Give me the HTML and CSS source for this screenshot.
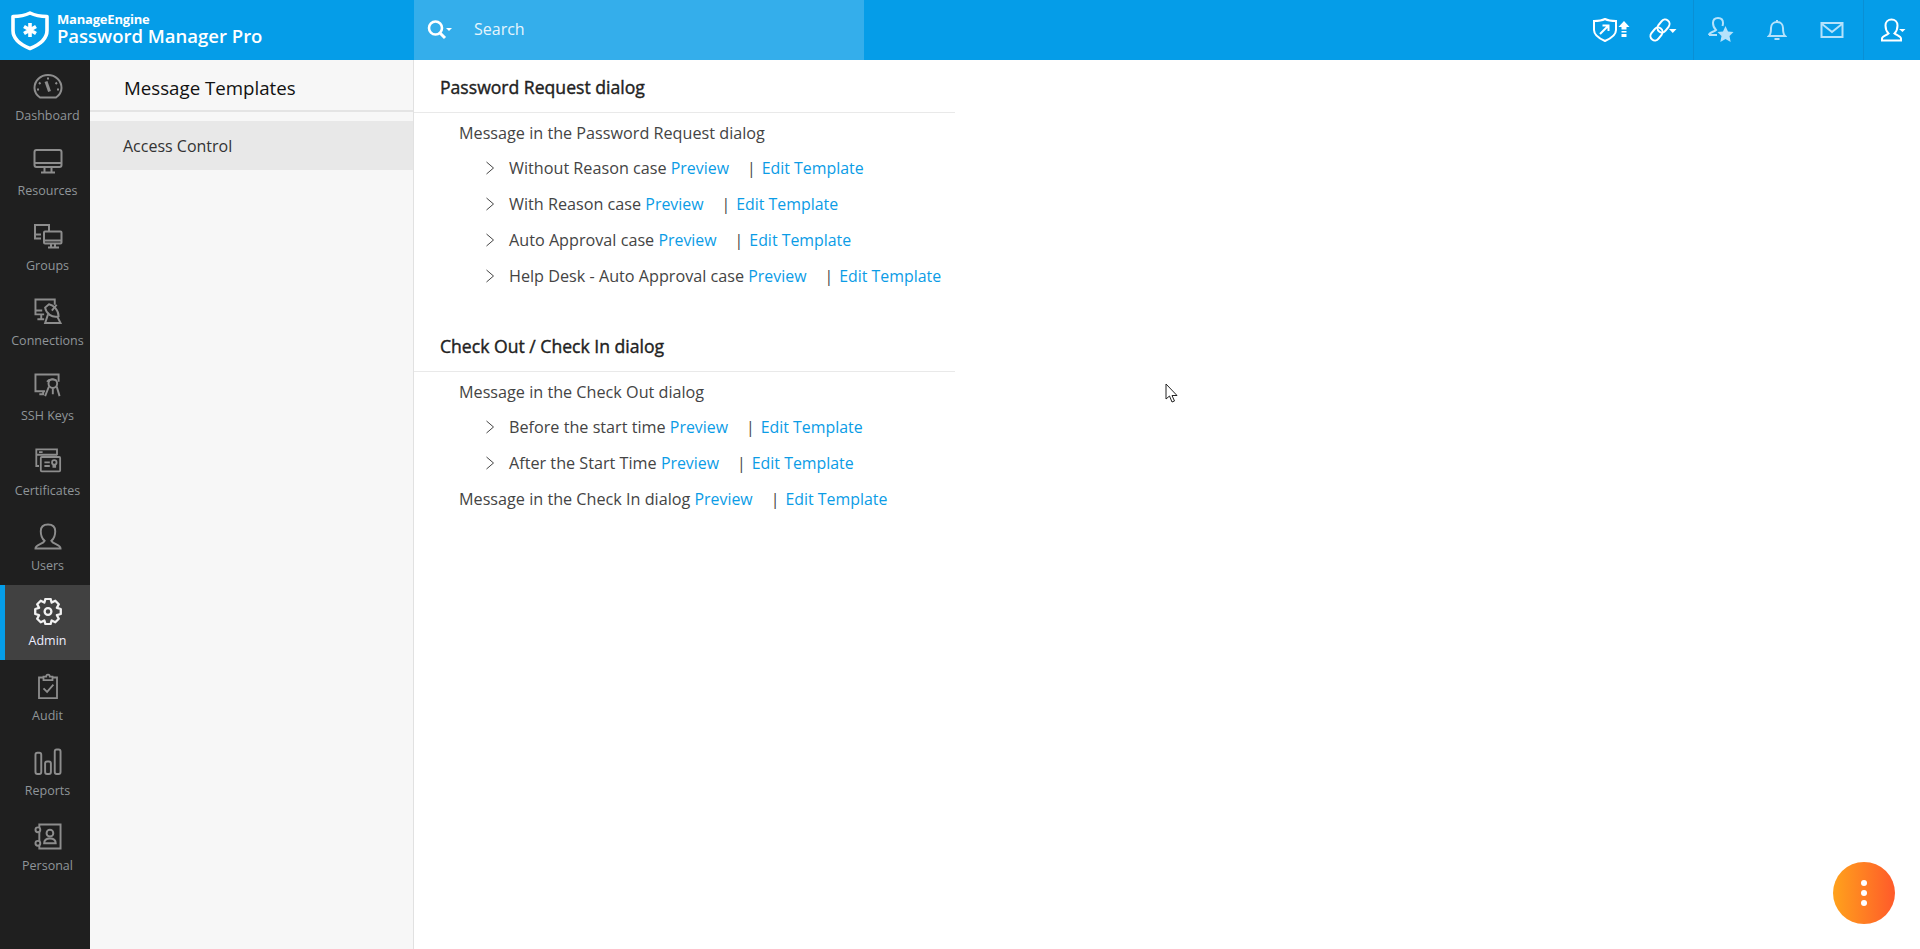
FILE: index.html
```html
<!DOCTYPE html>
<html lang="en">
<head>
<meta charset="utf-8">
<title>Password Manager Pro</title>
<link rel="stylesheet" href="styles.css">
</head>
<body>
<header class="topbar">
  <div class="brand">
    <svg class="brand-mark" width="40" height="41" viewBox="0 0 40 41"><path d="M20 3c5 2.500 10 3.500 17 3.500v14c0 9-7 14-17 18C10 34.500 3 29.500 3 20.500v-14c7 0 12-1 17-3.500z" fill="none" stroke="#fff" stroke-width="3.600" stroke-linejoin="round"/><path d="M20 13v14M14 16.500l12 7M26 16.500l-12 7" stroke="#fff" stroke-width="3.600"/></svg>
    <div class="brand-text"><span class="brand-me">ManageEngine</span><span class="brand-pmp">Password Manager Pro</span></div>
  </div>
  <div class="search">
    <svg width="28" height="22" viewBox="0 0 28 22" fill="none" stroke="#fff"><circle cx="9.500" cy="9" r="6.500" stroke-width="2.600"/><path d="M14 14l5 5" stroke-width="3"/><path d="M20 9h6l-3 3z" fill="#fff" stroke="none"/></svg>
    <span class="search-text">Search</span>
  </div>
  <div class="tools">
    <div class="tool-group tg1">
      <svg width="38" height="26" viewBox="0 0 38 26" fill="none" stroke="#fff" stroke-width="2"><path d="M13 2c3 1.500 7 2 11 2v9c0 5-4 8-11 11C6 21 2 18 2 13V4c4 0 8-.5 11-2z"/><path d="M8 17l8-8M10.500 8.500H16.500V14"/><path d="M32 4l5.500 6h-11z" fill="#fff" stroke="none"/><path d="M32 10v2.500M32 14v1.500M32 17v3" stroke-width="5"/></svg>
      <svg width="28" height="26" viewBox="0 0 28 26" fill="none" stroke="#fff" stroke-width="2"><rect x="-4.500" y="-7" width="9" height="14" rx="4.500" transform="translate(14.500 9) rotate(38)"/><rect x="-4.500" y="-7" width="9" height="14" rx="4.500" transform="translate(7.500 17) rotate(38)"/><path d="M20 12h7.500l-3.750 4z" fill="#fff" stroke="none"/></svg>
    </div>
    <div class="tool-group tg2">
      <svg width="26" height="26" viewBox="0 0 26 26" fill="none" stroke="#b5e2fb" stroke-width="2"><path d="M1 18c0-3 5-3 7-5-2-2-3-4-3-7 0-3 2-5 5-5s5 2 5 5c0 1-.2 2-.5 3M9 18H1"/><path d="M17.500 9l2.500 5.500 5.500.5-4 4 1.200 6-5.200-3-5.200 3 1.200-6-4-4 5.500-.5z" fill="#b5e2fb" stroke="none"/></svg>
      <svg width="20" height="22" viewBox="0 0 20 22" fill="none" stroke="#b5e2fb" stroke-width="2"><path d="M2 17h16c-2-2-2-4-2-8 0-3.500-2.500-6-6-6S4 5.500 4 9c0 4 0 6-2 8z"/><path d="M7.500 20h5M10 1v2"/></svg>
      <svg width="24" height="18" viewBox="0 0 24 18" fill="none" stroke="#b5e2fb" stroke-width="2"><rect x="1.500" y="2" width="21" height="14"/><path d="M2 3l10 8 10-8"/></svg>
    </div>
    <div class="tool-group tg3">
      <svg width="26" height="24" viewBox="0 0 26 24" fill="none" stroke="#fff" stroke-width="2"><path d="M2 22.500v-2c0-2 4-3 6.500-5-2-2-3-4.500-3-8 0-3.500 2.500-6 6-6s6 2.500 6 6c0 3.500-1 6-3 8 2 1.500 6.500 3 6.500 5v2z"/><path d="M19 11h6.500l-3 3z" fill="#fff" stroke="none"/></svg>
    </div>
  </div>
</header>
<div class="shell">
  <nav class="rail">
    <a class="rail-item"><svg class="ri" viewBox="0 0 30 26"><path d="M7 24C3.500 21.500 1.500 18 1.500 14.500 1.500 7 7.500 1.500 15 1.500S28.500 7 28.500 14.500c0 3.500-2 7-5.500 9.500z"/><path d="M13 8l3.500 10" stroke-width="3"/><path d="M15 4v2M6 9l1.500 1.500M24 9l-1.500 1.500M4 16h2M24 16h2"/></svg><span>Dashboard</span></a>
    <a class="rail-item"><svg class="ri" viewBox="0 0 30 26"><rect x="1.500" y="1.500" width="27" height="17" rx="2"/><path d="M2 14.500h26M11.500 19v4M18.500 19v4M8 24h14" /></svg><span>Resources</span></a>
    <a class="rail-item"><svg class="ri" viewBox="0 0 30 26"><path d="M8 15H2V1.500h14V8"/><path d="M8 11H2"/><rect x="11" y="8" width="17.500" height="12" rx="1"/><path d="M11 17h17M18 20v3M22 20v3M15 24h11"/></svg><span>Groups</span></a>
    <a class="rail-item"><svg class="ri" viewBox="0 0 30 28"><path d="M11 17H2V1.500h20V7"/><path d="M2 13h7M8 17v4M4 22h7"/><path d="M16 6.500c5 1 10 6 10 12.500-7 2-13-3-14-9z"/><path d="M15 17l-3 9h16l-3.500-7M19 13l5-6"/></svg><span>Connections</span></a>
    <a class="rail-item"><svg class="ri" viewBox="0 0 30 28"><path d="M12 19H2V1.500h24V9"/><path d="M10 19v3H6"/><circle cx="20" cy="11" r="4.500"/><path d="M16 14l-4 10M24 14l3 10M20 16v6"/><path d="M14 9c2-3 7-3 10-1"/></svg><span>SSH Keys</span></a>
    <a class="rail-item"><svg class="ri" viewBox="0 0 30 30"><path d="M5 20H2V1.500h23V8"/><path d="M2 7.500h23M5 4.500h4" /><rect x="7" y="10" width="21.500" height="16" rx="1"/><path d="M11 16h6M11 20h6"/><circle cx="22" cy="16" r="2.500"/><path d="M21 19v3M23 19v3"/></svg><span>Certificates</span></a>
    <a class="rail-item"><svg class="ri" viewBox="0 0 30 28"><path d="M2 26.500c0-4 8-4.500 9.500-8-3-2.500-4-6-4-10C7.500 4 10.500 1.500 15 1.500S22.500 4 22.500 8.500c0 4-1 7.500-4 10 1.500 3.500 9.500 4 9.500 8z"/></svg><span>Users</span></a>
    <a class="rail-item active"><svg class="ri" viewBox="0 0 30 28"><path stroke-linejoin="round" d="M12.400.75h5.200l1.230 4.010 3.720-1.950 3.640 3.640-1.950 3.720 4.010 1.230v5.200l-4.010 1.230 1.950 3.720-3.640 3.640-3.720-1.950-1.230 4.010h-5.200l-1.230-4.010-3.720 1.950-3.640-3.640 1.950-3.720-4.010-1.230v-5.200l4.010-1.230-1.950-3.720 3.640-3.640 3.720 1.950z"/><circle cx="15" cy="14" r="3.500"/></svg><span>Admin</span></a>
    <a class="rail-item"><svg class="ri" viewBox="0 0 30 30"><path d="M10 5H5v23h20V5h-5"/><path d="M10 8V4h3c0-3 4-3 4 0h3v4z"/><path d="M10 17l4 4 7-8"/></svg><span>Audit</span></a>
    <a class="rail-item"><svg class="ri" viewBox="0 0 30 28"><rect x="2" y="5" width="6" height="22" rx="2"/><rect x="12" y="14" width="6" height="13" rx="2"/><rect x="22" y="1.500" width="6" height="25.500" rx="2"/></svg><span>Reports</span></a>
    <a class="rail-item"><svg class="ri" viewBox="0 0 30 28"><path d="M6 5V1.500h22v25H6V23M6 9v10"/><circle cx="4.500" cy="7" r="2.500"/><circle cx="4.500" cy="21" r="2.500"/><circle cx="17" cy="10.500" r="3.500"/><path d="M11 21c0-4 3-5 6-5s6 1 6 5z"/></svg><span>Personal</span></a>
  </nav>
  <aside class="subnav">
    <h2 class="subnav-title">Message Templates</h2>
    <a class="subnav-item">Access Control</a>
  </aside>
  <main class="content">
    <section class="block">
      <h3 class="block-title">Password Request dialog</h3>
      <div class="lines">
        <p class="line">Message in the Password Request dialog</p>
        <p class="line sub"><svg class="chev" viewBox="0 0 10 14"><path d="M1.500 1l7 6-7 6"/></svg>Without Reason case <a>Preview</a><span class="sep">|</span><a>Edit Template</a></p>
        <p class="line sub"><svg class="chev" viewBox="0 0 10 14"><path d="M1.500 1l7 6-7 6"/></svg>With Reason case <a>Preview</a><span class="sep">|</span><a>Edit Template</a></p>
        <p class="line sub"><svg class="chev" viewBox="0 0 10 14"><path d="M1.500 1l7 6-7 6"/></svg>Auto Approval case <a>Preview</a><span class="sep">|</span><a>Edit Template</a></p>
        <p class="line sub"><svg class="chev" viewBox="0 0 10 14"><path d="M1.500 1l7 6-7 6"/></svg>Help Desk - Auto Approval case <a>Preview</a><span class="sep">|</span><a>Edit Template</a></p>
      </div>
    </section>
    <section class="block second">
      <h3 class="block-title">Check Out / Check In dialog</h3>
      <div class="lines">
        <p class="line">Message in the Check Out dialog</p>
        <p class="line sub"><svg class="chev" viewBox="0 0 10 14"><path d="M1.500 1l7 6-7 6"/></svg>Before the start time <a>Preview</a><span class="sep">|</span><a>Edit Template</a></p>
        <p class="line sub"><svg class="chev" viewBox="0 0 10 14"><path d="M1.500 1l7 6-7 6"/></svg>After the Start Time <a>Preview</a><span class="sep">|</span><a>Edit Template</a></p>
        <p class="line">Message in the Check In dialog <a>Preview</a><span class="sep">|</span><a>Edit Template</a></p>
      </div>
    </section>
  </main>
</div>
<svg class="cursor" width="14" height="21" viewBox="0 0 14 21"><path d="M1 1v15l3.500-3 2.500 6 2.500-1-2.500-5.500H12z" fill="#fff" stroke="#222" stroke-width="1"/></svg>
<button class="fab"><i></i><i></i><i></i></button>
</body>
</html>
```
FILE: styles.css
```css
* { box-sizing: border-box; }
html, body { height: 100%; }
body { margin: 0; height: 949px; overflow: hidden; font-family: "Open Sans", "Liberation Sans", sans-serif; font-size: 16px; color: #444; background: #fff; display: flex; flex-direction: column; }
.topbar { height: 60px; flex: none; background: #059de8; display: flex; align-items: stretch; color: #fff; }
.brand { width: 414px; flex: none; display: flex; align-items: center; gap: 7px; padding-left: 10px; }
.brand-mark { flex: none; }
.brand-text { display: flex; flex-direction: column; font-weight: 600; line-height: 1; margin-top: -2px; }
.brand-me { font-size: 13px; font-weight: 700; letter-spacing: -0.200px; margin-bottom: 1px; }
.brand-pmp { font-size: 18.500px; white-space: nowrap; }
.search { width: 450px; flex: none; background: #34aeeb; display: flex; align-items: center; padding-left: 12px; gap: 20px; }
.search-text { font-size: 16px; color: #e6f5fd; margin-top: -3px; }
.tools { flex: 1; display: flex; justify-content: flex-end; }
.tool-group { display: flex; align-items: center; height: 60px; }
.tg1 { gap: 19px; padding-right: 16px; }
.tg2 { gap: 33px; width: 171px; padding-left: 14px; border-left: 1px solid #0a8fd4; border-right: 1px solid #0a8fd4; }
.tg3 { width: 56px; padding-left: 16px; }
.shell { flex: 1; display: flex; min-height: 0; }
.rail { width: 90px; flex: none; background: #1f1f1f; display: flex; flex-direction: column; }
.rail-item { height: 75px; display: flex; flex-direction: column; align-items: center; padding-top: 13px; border-left: 5px solid transparent; color: #8f9599; font-size: 12.500px; line-height: 18px; }
.rail-item span { margin-top: 7px; }
.ri { width: 30px; height: 27px; fill: none; stroke: #8d8d8d; stroke-width: 2; }
.rail-item.active { background: #414141; border-left-color: #059de8; color: #eef; }
.active .ri { stroke: #f1f1f1; stroke-width: 2.400; }
.subnav { width: 324px; flex: none; background: #f7f7f7; border-right: 1px solid #e1e1e1; }
.subnav-title { margin: 0; height: 52px; padding: 16px 0 0 34px; font-size: 18.700px; font-weight: 400; line-height: 24px; color: #111; border-bottom: 2px solid #e4e4e4; }
.subnav-item { display: block; margin-top: 9px; height: 49px; padding: 1px 0 0 33px; background: #e8e8e8; line-height: 48px; font-size: 16px; color: #333; }
.content { flex: 1; }
.block { width: 541px; }
.block-title { margin: 0; height: 53px; padding: 15px 0 0 26px; font-size: 17.600px; font-weight: 400; -webkit-text-stroke: 0.400px #222; line-height: 24px; color: #222; border-bottom: 1px solid #e9e9e9; }
.second { margin-top: 25px; }
.lines { padding-top: 2px; }
.line { margin: 0; height: 36px; padding-left: 45px; display: flex; align-items: center; line-height: 36px; white-space: pre; font-size: 16.200px; }
.line:first-child { height: 35px; }
.line a { color: #0b9ce6; font-size: 15.900px; }
.sub { padding-left: 71px; }
.chev { width: 10px; height: 14px; margin-right: 14px; fill: none; stroke: #444; stroke-width: 1; }
.sep { margin: 0 6px 0 18px; font-size: 15.900px; }
.cursor { position: absolute; left: 1165px; top: 383px; }
.fab { position: absolute; left: 1833px; top: 862px; width: 62px; height: 62px; border: 0; border-radius: 50%; background: linear-gradient(90deg, #ffa21c, #ff5a2a); display: flex; flex-direction: column; align-items: center; justify-content: center; gap: 4px; padding: 0; }
.fab i { width: 6px; height: 6px; border-radius: 50%; background: #fff; }
```
